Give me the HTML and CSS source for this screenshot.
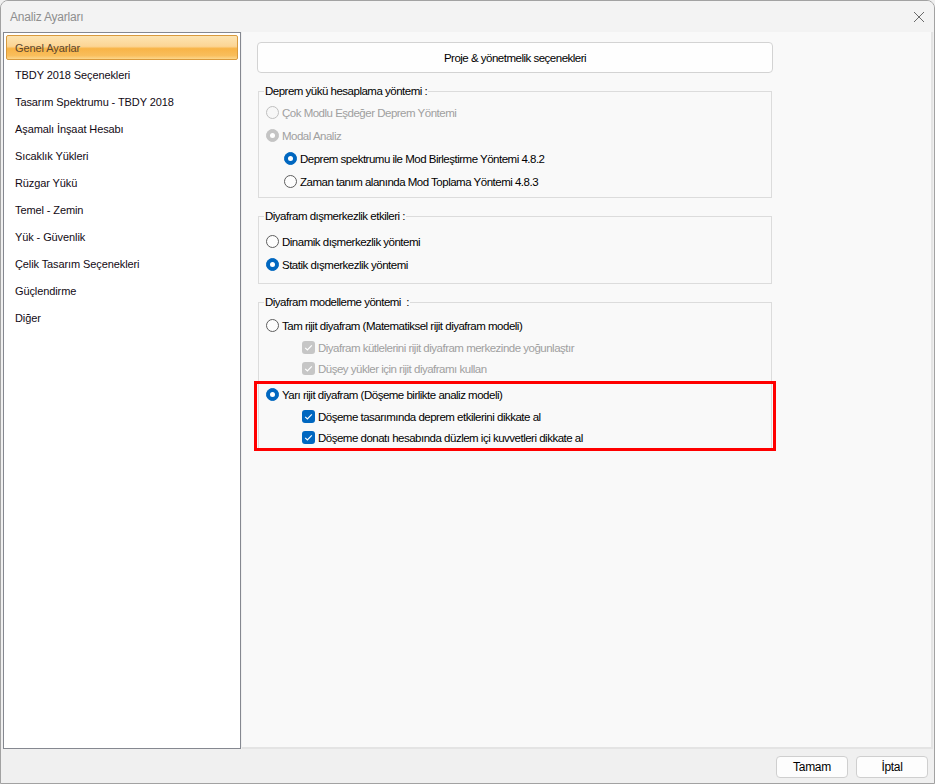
FILE: index.html
```html
<!DOCTYPE html>
<html lang="tr">
<head>
<meta charset="utf-8">
<title>Analiz Ayarları</title>
<link rel="stylesheet" href="styles.css">
</head>
<body>
<div class="window">
  <div class="titlebar">
    <span class="title">Analiz Ayarları</span>
    <svg class="close" width="12" height="12" viewBox="0 0 12 12"><path d="M1 1L11 11M11 1L1 11" stroke="#6a6a6a" stroke-width="1" fill="none"/></svg>
  </div>
  <div class="main">
    <ul class="nav">
      <li class="sel">Genel Ayarlar</li>
      <li>TBDY 2018 Seçenekleri</li>
      <li>Tasarım Spektrumu - TBDY 2018</li>
      <li>Aşamalı İnşaat Hesabı</li>
      <li>Sıcaklık Yükleri</li>
      <li>Rüzgar Yükü</li>
      <li>Temel - Zemin</li>
      <li>Yük - Güvenlik</li>
      <li>Çelik Tasarım Seçenekleri</li>
      <li>Güçlendirme</li>
      <li>Diğer</li>
    </ul>
    <div class="panel">
      <div class="btn-wide">Proje &amp; yönetmelik seçenekleri</div>

      <fieldset class="group g1">
        <legend>Deprem yükü hesaplama yöntemi :</legend>
        <div class="row dis"><span class="radio"></span><span>Çok Modlu Eşdeğer Deprem Yöntemi</span></div>
        <div class="row dis"><span class="radio on"></span><span>Modal Analiz</span></div>
        <div class="row sub"><span class="radio on"></span><span>Deprem spektrumu ile Mod Birleştirme Yöntemi 4.8.2</span></div>
        <div class="row sub"><span class="radio"></span><span>Zaman tanım alanında Mod Toplama Yöntemi 4.8.3</span></div>
      </fieldset>

      <fieldset class="group g2">
        <legend>Diyafram dışmerkezlik etkileri :</legend>
        <div class="row"><span class="radio"></span><span>Dinamik dışmerkezlik yöntemi</span></div>
        <div class="row"><span class="radio on"></span><span>Statik dışmerkezlik yöntemi</span></div>
      </fieldset>

      <fieldset class="group g3">
        <legend>Diyafram modelleme yöntemi &nbsp;:</legend>
        <div class="row"><span class="radio"></span><span>Tam rijit diyafram (Matematiksel rijit diyafram modeli)</span></div>
        <div class="row chk dis"><span class="check"><svg width="13" height="13" viewBox="0 0 13 13"><path d="M3.2 6.8L5.4 9L9.8 4.4" stroke="#fff" stroke-width="1.2" fill="none"/></svg></span><span>Diyafram kütlelerini rijit diyafram merkezinde yoğunlaştır</span></div>
        <div class="row chk dis"><span class="check"><svg width="13" height="13" viewBox="0 0 13 13"><path d="M3.2 6.8L5.4 9L9.8 4.4" stroke="#fff" stroke-width="1.2" fill="none"/></svg></span><span>Düşey yükler için rijit diyaframı kullan</span></div>
        <div class="highlight">
          <div class="row"><span class="radio on"></span><span>Yarı rijit diyafram (Döşeme birlikte analiz modeli)</span></div>
          <div class="row chk"><span class="check"><svg width="13" height="13" viewBox="0 0 13 13"><path d="M3.2 6.8L5.4 9L9.8 4.4" stroke="#fff" stroke-width="1.2" fill="none"/></svg></span><span>Döşeme tasarımında deprem etkilerini dikkate al</span></div>
          <div class="row chk"><span class="check"><svg width="13" height="13" viewBox="0 0 13 13"><path d="M3.2 6.8L5.4 9L9.8 4.4" stroke="#fff" stroke-width="1.2" fill="none"/></svg></span><span>Döşeme donatı hesabında düzlem içi kuvvetleri dikkate al</span></div>
          <span class="annot"></span>
        </div>
      </fieldset>
    </div>
  </div>
  <div class="footer">
    <div class="btn">Tamam</div>
    <div class="btn">İptal</div>
  </div>
</div>
</body>
</html>
```

FILE: styles.css
```css
html, body {
  margin: 0;
  padding: 0;
}
body {
  width: 935px;
  height: 784px;
  overflow: hidden;
  background: #f0f0f0;
  font-family: "Liberation Sans", Arial, sans-serif;
}
.window {
  box-sizing: border-box;
  width: 935px;
  height: 784px;
  border: 1px solid #a2a2a2;
  border-radius: 8px 8px 0 0;
  background: #f0f0f0;
  display: flex;
  flex-direction: column;
  overflow: hidden;
}
.titlebar {
  height: 31px;
  flex: none;
  background: #f3f3f3;
  display: flex;
  align-items: center;
  justify-content: space-between;
  padding: 0 9px 0 9px;
}
.title {
  font-size: 12px;
  color: #8e8e8e;
  letter-spacing: -0.2px;
}
.main {
  flex: 1;
  display: flex;
  gap: 1px;
  padding: 0 1px 0 2px;
  min-height: 0;
}
.nav {
  list-style: none;
  margin: 0;
  width: 238px;
  box-sizing: border-box;
  border: 1px solid #858890;
  background: #ffffff;
  padding: 2px;
  font-size: 11px;
  letter-spacing: -0.1px;
  color: #120a14;
}
.nav li {
  height: 25px;
  margin-bottom: 2px;
  box-sizing: border-box;
  border: 1px solid transparent;
  border-radius: 2px;
  padding-left: 8px;
  display: flex;
  align-items: center;
}
.nav li.sel {
  border-color: #d99a3d;
  color: #5a4630;
  background: linear-gradient(#fde4b2 0%, #fcd594 45%, #f8b447 55%, #f9be5c 85%, #fcd78c 100%);
}
.panel {
  flex: 1;
  background: #f9f9f9;
  border-right: 2px solid #e4e4e4;
  border-bottom: 2px solid #e4e4e4;
  padding: 10px 0 0 15px;
  font-size: 11.5px;
  letter-spacing: -0.5px;
  color: #000;
}
.btn-wide {
  box-sizing: border-box;
  width: 516px;
  height: 31px;
  background: #fefefe;
  border: 1px solid #d3d3d3;
  border-radius: 4px;
  display: flex;
  align-items: center;
  justify-content: center;
}
.group {
  margin: 11px 0 0 1px;
  width: 514px;
  box-sizing: border-box;
  border: 1px solid #dcdcdc;
  padding: 0 0 0 7px;
  min-width: 0;
}
.group legend {
  line-height: 14px;
  padding: 0 1px;
  margin-left: -2px;
}
.g1 { padding-top: 3px; padding-bottom: 4px; }
.g2 { padding-top: 7px; padding-bottom: 7px; }
.g3 { padding-top: 5px; padding-bottom: 0; }
.row {
  height: 23px;
  display: flex;
  align-items: center;
  gap: 3px;
}
.row.chk {
  height: 21px;
  padding-left: 36px;
}
.row.sub {
  padding-left: 18px;
}
.row.dis {
  color: #a0a0a0;
}
.radio {
  width: 13px;
  height: 13px;
  box-sizing: border-box;
  border-radius: 50%;
  border: 1px solid #5e5e5e;
  background: #fdfdfd;
  display: flex;
  align-items: center;
  justify-content: center;
  flex: none;
}
.radio.on {
  background: #0067c0;
  border-color: #0067c0;
}
.radio.on::after {
  content: "";
  width: 5px;
  height: 5px;
  border-radius: 50%;
  background: #ffffff;
}
.dis .radio {
  border-color: #bfbfbf;
  background: #f7f7f7;
}
.dis .radio.on {
  background: #c4c4c4;
  border-color: #c4c4c4;
}
.check {
  width: 13px;
  height: 13px;
  border-radius: 3px;
  background: #0067c0;
  flex: none;
  display: flex;
}
.dis .check {
  background: #c6c6c6;
}
.highlight {
  position: relative;
  margin-top: 4px;
}
.annot {
  position: absolute;
  left: -12px;
  right: -5px;
  top: -2px;
  bottom: -3px;
  border: 3px solid #ff0000;
  pointer-events: none;
}
.footer {
  height: 34px;
  flex: none;
  display: flex;
  justify-content: flex-end;
  align-items: flex-start;
  gap: 8px;
  padding: 7px 6px 0 0;
  box-sizing: border-box;
}
.btn {
  box-sizing: border-box;
  width: 72px;
  height: 22px;
  background: #fdfdfd;
  border: 1px solid #cfcfcf;
  border-radius: 4px;
  font-size: 12px;
  letter-spacing: -0.3px;
  display: flex;
  align-items: center;
  justify-content: center;
  color: #000;
}
```
